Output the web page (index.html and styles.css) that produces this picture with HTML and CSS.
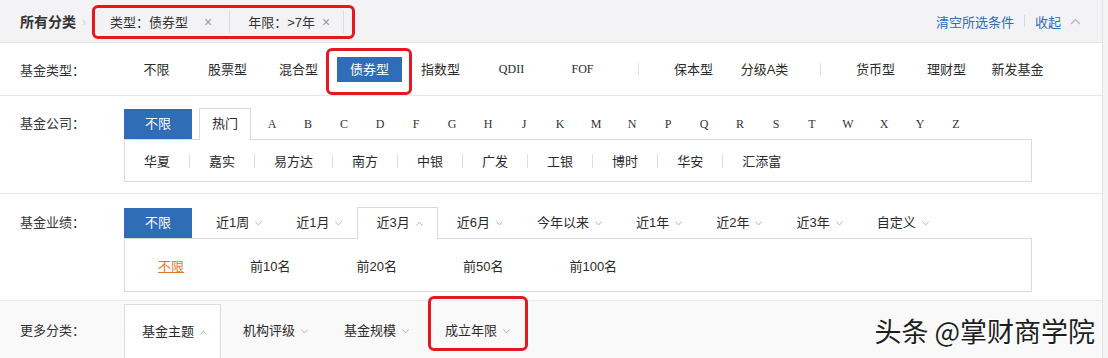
FILE: index.html
```html
<!DOCTYPE html>
<html lang="zh-CN">
<head>
  <meta charset="UTF-8" />
  <meta name="viewport" content="width=device-width, initial-scale=1.0"/>
  <title>基金筛选</title>
  <link rel="stylesheet" href="styles.css">
</head>
<body>

<div class="page">

  <!-- Selected filters -->
  <div class="crumbs">
    <span class="crumb-title">所有分类</span>
    <span class="crumb-arrow">›</span>
    <div class="picked">
      <span class="pick">类型：债券型<i class="x">×</i></span>
      <span class="pick">年限：&gt;7年<i class="x">×</i></span>
    </div>
    <div class="crumb-links">
      <a>清空所选条件</a>
      <span class="bar"></span>
      <a>收起</a>
      <svg class="chev" width="11" height="7" viewBox="0 0 11 7"><polyline points="1,6 5.5,1.5 10,6" fill="none" stroke="#a9b7c8" stroke-width="1.2"/></svg>
    </div>
  </div>

  <!-- Fund type -->
  <div class="row row-type">
    <div class="label">基金类型：</div>
    <div class="type-list">
      <span class="opt">不限</span>
      <span class="opt">股票型</span>
      <span class="opt">混合型</span>
      <span class="opt on">债券型</span>
      <span class="opt">指数型</span>
      <span class="opt latin">QDII</span>
      <span class="opt latin">FOF</span>
      <span class="vsep"></span>
      <span class="opt">保本型</span>
      <span class="opt">分级A类</span>
      <span class="vsep"></span>
      <span class="opt">货币型</span>
      <span class="opt">理财型</span>
      <span class="opt">新发基金</span>
    </div>
  </div>

  <!-- Fund company -->
  <div class="row row-co">
    <div class="label tall">基金公司：</div>
    <div class="panel">
      <div class="tabs">
        <span class="tab on">不限</span>
        <span class="tab open">热门</span>
        <div class="letters">
          <span>A</span><span>B</span><span>C</span><span>D</span><span>F</span>
          <span>G</span><span>H</span><span>J</span><span>K</span><span>M</span>
          <span>N</span><span>P</span><span>Q</span><span>R</span><span>S</span>
          <span>T</span><span>W</span><span>X</span><span>Y</span><span>Z</span>
        </div>
      </div>
      <div class="box box-co">
        <span class="co">华夏</span><span class="sep"></span>
        <span class="co">嘉实</span><span class="sep"></span>
        <span class="co">易方达</span><span class="sep"></span>
        <span class="co">南方</span><span class="sep"></span>
        <span class="co">中银</span><span class="sep"></span>
        <span class="co">广发</span><span class="sep"></span>
        <span class="co">工银</span><span class="sep"></span>
        <span class="co">博时</span><span class="sep"></span>
        <span class="co">华安</span><span class="sep"></span>
        <span class="co">汇添富</span>
      </div>
    </div>
  </div>

  <!-- Performance -->
  <div class="row row-perf">
    <div class="label tall">基金业绩：</div>
    <div class="panel">
      <div class="tabs">
        <span class="tab on gap">不限</span>
        <span class="tab drop">近1周<i class="tri"></i></span>
        <span class="tab drop">近1月<i class="tri"></i></span>
        <span class="tab drop open">近3月<i class="tri up"></i></span>
        <span class="tab drop">近6月<i class="tri"></i></span>
        <span class="tab drop">今年以来<i class="tri"></i></span>
        <span class="tab drop">近1年<i class="tri"></i></span>
        <span class="tab drop">近2年<i class="tri"></i></span>
        <span class="tab drop">近3年<i class="tri"></i></span>
        <span class="tab drop">自定义<i class="tri"></i></span>
      </div>
      <div class="box box-perf">
        <span class="rank cur">不限</span>
        <span class="rank">前10名</span>
        <span class="rank">前20名</span>
        <span class="rank">前50名</span>
        <span class="rank">前100名</span>
      </div>
    </div>
  </div>

  <!-- More -->
  <div class="row row-more">
    <div class="label more">更多分类：</div>
    <div class="more-tabs">
      <span class="more-tab open">基金主题<i class="tri up"></i></span>
      <span class="more-tab">机构评级<i class="tri"></i></span>
      <span class="more-tab">基金规模<i class="tri"></i></span>
      <span class="more-tab mark">成立年限<i class="tri"></i></span>
    </div>
  </div>

  <div class="watermark">头条 @掌财商学院</div>
</div>

</body>
</html>
```

FILE: styles.css
```css
body {
  margin: 0;
  background: #f4f4f4;
  font-family: "Liberation Sans", "Noto Sans CJK SC", sans-serif;
  font-size: 13px;
  color: #2a2a2a;
}
.page {
  position: relative;
  width: 1102px;
  height: 358px;
  overflow: hidden;
  background: #fdfdfd;
  border-right: 1px solid #e2e2e2;
}

/* top bar */
.crumbs {
  height: 42px;
  display: flex;
  align-items: center;
  padding: 0 20px;
  background: #f3f3f5;
  border-bottom: 1px solid #e4e4e6;
}
.crumb-title {
  font-size: 14px;
  font-weight: bold;
  color: #333;
}
.crumb-arrow {
  color: #d4d4d4;
  margin: 0 4px 0 6px;
  width: 6px;
}
.picked {
  display: flex;
  align-items: center;
  height: 28px;
  border: 3px solid #e3191f;
  border-radius: 6px;
  margin-top: 1px;
}
.pick {
  display: flex;
  align-items: center;
  height: 22px;
  padding: 0 17px 0 15px;
  border-right: 1px solid #dcdcdc;
  color: #333;
}
.pick + .pick {
  padding: 0 13px 0 18px;
  margin-right: 8px;
}
.pick .x {
  font-style: normal;
  color: #999;
  font-size: 14px;
  margin-left: 16px;
}
.pick + .pick .x {
  margin-left: 7px;
}
.crumb-links {
  margin-left: auto;
  display: flex;
  align-items: center;
  color: #2d6db5;
  padding-right: 1px;
}
.crumb-links .bar {
  width: 1px;
  height: 12px;
  background: #d8d8d8;
  margin: 0 10px;
}
.chev {
  margin-left: 9px;
}

/* rows */
.row {
  display: flex;
  border-bottom: 1px solid #e7e7e7;
}
.label {
  flex: none;
  width: 104px;
  padding-left: 20px;
  color: #333;
}
.label.tall {
  line-height: 29px;
}

/* fund type */
.row-type {
  height: 52px;
  align-items: center;
  background: #fff;
}
.type-list {
  display: flex;
  align-items: center;
  margin-left: -3px;
}
.opt {
  width: 65px;
  height: 25px;
  line-height: 25px;
  margin: 0 3px;
  text-align: center;
}
.opt.latin {
  font-family: "Liberation Serif", serif;
  font-size: 12px;
}
.opt.on {
  position: relative;
  background: #2f6db6;
  color: #fff;
}
.opt.on::after {
  content: "";
  position: absolute;
  left: -11px;
  right: -10px;
  top: -9px;
  bottom: -13px;
  border: 3px solid #e3191f;
  border-radius: 6px;
}
.vsep {
  width: 40px;
  display: flex;
  justify-content: center;
}
.vsep::before {
  content: "";
  width: 1px;
  height: 12px;
  background: #e0e0e0;
}

/* tabs + box panels */
.row-co {
  padding: 13px 0 11px;
  background: #fff;
}
.row-perf {
  padding: 14px 0 8px;
  background: #fff;
}
.panel {
  width: 908px;
}
.tabs {
  display: flex;
  align-items: flex-end;
  height: 30px;
}
.tab {
  height: 30px;
  line-height: 30px;
  padding: 0 21px;
  white-space: nowrap;
}
.tab.on {
  background: #2f6db6;
  color: #fff;
  margin-right: 7px;
}
.tab.on.gap {
  margin-right: 5px;
}
.tab.open {
  position: relative;
  z-index: 1;
  height: 31px;
  margin-bottom: -1px;
  padding: 0 12px;
  background: #fff;
  border: 1px solid #d9d9d9;
  border-bottom: 0;
}
.letters {
  display: flex;
  margin-left: 3px;
}
.letters span {
  width: 36px;
  line-height: 30px;
  text-align: center;
  font-family: "Liberation Serif", serif;
  font-size: 12px;
  color: #333;
}
.tab.drop {
  padding: 0 15px 0 19px;
}
.tab.drop.open {
  padding: 0 14px 0 18px;
}
.tri {
  display: inline-block;
  width: 7px;
  height: 5px;
  margin-left: 6px;
  vertical-align: 1px;
  background: url("data:image/svg+xml;utf8,<svg xmlns='http://www.w3.org/2000/svg' width='7' height='5'><polyline points='0.5,0.5 3.5,4 6.5,0.5' fill='none' stroke='%23b4b4b4' stroke-width='1'/></svg>") no-repeat;
}
.tri.up {
  transform: rotate(180deg);
}
.box {
  display: flex;
  align-items: center;
  border: 1px solid #d9d9d9;
  background: #fff;
}
.box-co {
  height: 41px;
}
.co {
  padding: 0 19px;
}
.sep {
  width: 1px;
  height: 14px;
  background: #dedede;
}
.box-perf {
  height: 52px;
}
.rank {
  padding: 0 33px;
}
.rank.cur {
  color: #e8742c;
  text-decoration: underline;
}

/* more */
.row-more {
  padding-top: 3px;
  height: 60px;
  border-bottom: 0;
  background: #f9f9fa;
}
.label.more {
  line-height: 54px;
}
.more-tabs {
  display: flex;
}
.more-tab {
  height: 54px;
  line-height: 54px;
  padding: 0 14px 0 18px;
  margin-right: 4px;
}
.more-tab.open {
  background: #fff;
  border: 1px solid #dcdcdc;
  border-bottom: 0;
  padding: 0 13px 0 17px;
  height: 60px;
}
.more-tab.mark {
  position: relative;
}
.more-tab.mark::after {
  content: "";
  position: absolute;
  left: 1px;
  right: -4px;
  top: -8px;
  bottom: 7px;
  border: 3px solid #e3191f;
  border-radius: 6px;
}

.watermark {
  position: absolute;
  right: 7px;
  bottom: 9px;
  font-family: "Noto Sans CJK SC", sans-serif;
  font-size: 27px;
  line-height: 36px;
  color: #1e1e1e;
  text-shadow: 1px 1px 0 #fff, -1px -1px 0 #fff, 0 0 3px #fff;
}
```
